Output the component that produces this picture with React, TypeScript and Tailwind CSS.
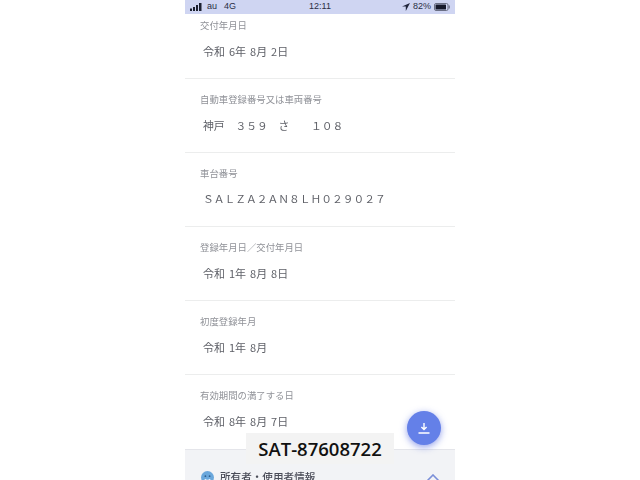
import React from 'react';

const FONT = "font-['Noto_Sans_CJK_JP','Noto_Sans',sans-serif]";

const ROWS = [
  { label: '自動車登録番号又は車両番号', value: '神戸　３５９　さ　　１０８', valueClass: 'text-[10.8px]' },
  { label: '車台番号', value: 'ＳＡＬＺＡ２ＡＮ８ＬＨ０２９０２７', valueClass: 'text-[10.75px]' },
  { label: '登録年月日／交付年月日', value: '令和 1年 8月 8日', valueClass: 'text-[11px] [word-spacing:1.5px]' },
  { label: '初度登録年月', value: '令和 1年 8月', valueClass: 'text-[11px] [word-spacing:1.5px]' },
  { label: '有効期間の満了する日', value: '令和 8年 8月 7日', valueClass: 'text-[11px] [word-spacing:1.5px]', last: true },
];

const Signal = () => (
  <svg width="12" height="8" viewBox="0 0 12 8" fill="#1c2030">
    <rect x="0" y="5.5" width="2" height="2.5" />
    <rect x="3" y="4" width="2" height="4" />
    <rect x="6" y="2" width="2" height="6" />
    <rect x="9" y="0" width="2.5" height="8" />
  </svg>
);

const Battery = () => (
  <svg width="16" height="8" viewBox="0 0 16 8">
    <rect x="0.5" y="0.5" width="13.5" height="7" rx="1.5" fill="none" stroke="#6a6f85" />
    <rect x="1.5" y="1.5" width="10.5" height="5" rx="0.5" fill="#15182a" />
    <rect x="14.6" y="2.5" width="1.2" height="3" fill="#6a6f85" />
  </svg>
);

const Face = () => (
  <svg width="13" height="13" viewBox="0 0 13 13">
    <circle cx="6.5" cy="6.5" r="6.5" fill="#6aa7dc" />
    <circle cx="4.4" cy="5.2" r="0.9" fill="#2f5f8e" />
    <circle cx="8.6" cy="5.2" r="0.9" fill="#2f5f8e" />
    <path d="M3.8 8.2c1.4 1.6 4 1.6 5.4 0" fill="none" stroke="#e8f1fa" strokeWidth="1.2" />
  </svg>
);

export default function App() {
  return (
    <div className={`relative w-[640px] h-[480px] overflow-hidden bg-white flex justify-center ${FONT}`}>
      <div className="w-[270px] h-[480px] flex flex-col overflow-hidden blur-[0.35px]">
        <div className="h-[14px] shrink-0 bg-[#cfd5f2] flex items-center justify-between px-[5px] text-[9px] text-[#2a2e44] font-['Liberation_Sans',sans-serif]">
          <div className="flex items-center gap-[5px] w-[90px]">
            <Signal />
            <span>au</span>
            <span className="ml-[2px]">4G</span>
          </div>
          <span>12:11</span>
          <div className="flex items-center justify-end gap-[3px] w-[90px]">
            <svg width="8" height="8" viewBox="0 0 8 8" fill="#20243a">
              <path d="M8 0 0 3.6h3.8V8z" />
            </svg>
            <span>82%</span>
            <Battery />
          </div>
        </div>

        <div className="h-[65px] shrink-0 border-b border-[#eceded] pl-[15px]">
          <div className="pt-[4px] text-[9.4px] leading-[14px] text-[#909298]">交付年月日</div>
          <div className="mt-[11px] pl-[3px] text-[11px] [word-spacing:1.5px] leading-[16px] text-[#5f6168]">令和 6年 8月 2日</div>
        </div>

        {ROWS.map((row) => (
          <div
            key={row.label}
            className={`h-[74px] shrink-0 pl-[15px] ${row.last ? '' : 'border-b border-[#eceded]'}`}
          >
            <div className="pt-[13px] text-[9.4px] leading-[14px] text-[#909298]">{row.label}</div>
            <div className={`mt-[11px] pl-[3px] leading-[16px] text-[#5f6168] whitespace-nowrap ${row.valueClass}`}>
              {row.value}
            </div>
          </div>
        ))}

        <div className="h-[31px] shrink-0 bg-[#f2f3f6] border-t border-[#e4e5ea] flex items-start justify-between pl-[16px] pr-[15px] pt-[20px]">
          <div className="flex items-center gap-[6px]">
            <Face />
            <span className="text-[10.6px] leading-[14px] font-medium text-[#4a4c58]">所有者・使用者情報</span>
          </div>
          <svg width="14" height="8" viewBox="0 0 14 8" fill="none" stroke="#7b8fd8" strokeWidth="1.6" className="mt-[4px]">
            <path d="M1 7 7 1l6 6" />
          </svg>
        </div>
      </div>

      <div className="absolute left-[407px] top-[411px] w-[34px] h-[34px] rounded-full bg-[#6480e8] shadow-[0_2px_7px_rgba(90,110,225,0.65)] flex items-center justify-center">
        <svg width="12" height="12" viewBox="0 0 12 12" fill="none" stroke="#fff" strokeWidth="1.4">
          <path d="M6 1v6.5M3.4 5 6 7.6 8.6 5M.5 11h11" />
        </svg>
      </div>

      <div className="absolute left-[246px] top-[433px] w-[148px] h-[31px] bg-[#f3f3f3] flex items-center justify-center text-[18.5px] font-semibold text-[#111] font-['Open_Sans',sans-serif]">
        SAT-87608722
      </div>
    </div>
  );
}
